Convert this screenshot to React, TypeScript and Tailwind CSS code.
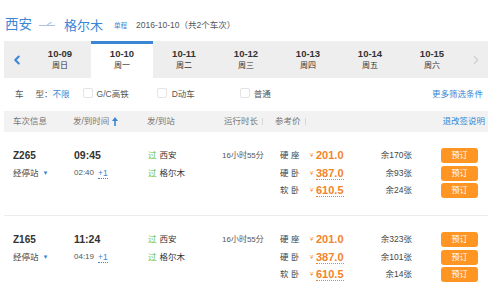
import { ChevronLeft, ChevronRight } from 'lucide-react';

const days = [
  { date: '10-09', week: '周日' },
  { date: '10-10', week: '周一', active: true },
  { date: '10-11', week: '周二' },
  { date: '10-12', week: '周三' },
  { date: '10-13', week: '周四' },
  { date: '10-14', week: '周五' },
  { date: '10-15', week: '周六' },
];

const trains = [
  {
    code: 'Z265',
    depart: '09:45',
    arrive: '02:40',
    seats: [
      { name: ['硬', '座'], price: '201.0', left: '余170张', dotted: false },
      { name: ['硬', '卧'], price: '387.0', left: '余93张', dotted: true },
      { name: ['软', '卧'], price: '610.5', left: '余24张', dotted: true },
    ],
  },
  {
    code: 'Z165',
    depart: '11:24',
    arrive: '04:19',
    seats: [
      { name: ['硬', '座'], price: '201.0', left: '余323张', dotted: false },
      { name: ['硬', '卧'], price: '387.0', left: '余101张', dotted: true },
      { name: ['软', '卧'], price: '610.5', left: '余14张', dotted: true },
    ],
  },
];

function Checkbox() {
  return <span className="w-[10px] h-[10px] shrink-0 border border-[#e4e4e4] rounded-[2px] bg-white inline-block" />;
}

function SortMark({ active }: { active?: boolean }) {
  if (active) {
    return (
      <svg width="6" height="9" viewBox="0 0 6 9" className="ml-[3px]">
        <path d="M3 0 L6 4 L3.8 4 L3.8 9 L2.2 9 L2.2 4 L0 4 Z" fill="#3a86d4" />
      </svg>
    );
  }
  return <span className="ml-[4px] w-[1px] h-[7px] bg-[#d8d8d8] inline-block" />;
}

function TrainRow({ train }: { train: (typeof trains)[number] }) {
  return (
    <div className="ml-[4px] w-[484px] h-[84px] border-b border-[#ececec] flex pt-[15px] pl-[9px] text-[8.5px] text-[#333]">
      <div className="w-[61px] shrink-0 flex flex-col">
        <div className="h-[17.5px] flex items-center font-bold text-[10px]">{train.code}</div>
        <div className="h-[17.5px] flex items-center text-[#444]">
          经停站 <span className="ml-[4px] text-[#3a86d4] text-[6px]">▼</span>
        </div>
      </div>
      <div className="w-[74px] shrink-0 flex flex-col">
        <div className="h-[17.5px] flex items-center font-bold text-[10.5px]">{train.depart}</div>
        <div className="h-[17.5px] flex items-center text-[8px] text-[#555]">
          {train.arrive}
          <span className="ml-[4px] text-[#3a86d4] border-b border-dotted border-[#3a86d4] leading-[10px] text-[8.5px]">+1</span>
        </div>
      </div>
      <div className="w-[74px] shrink-0 flex flex-col">
        <div className="h-[17.5px] flex items-center">
          <span className="text-[#5cbf3a] mr-[3px]">过</span>西安
        </div>
        <div className="h-[17.5px] flex items-center">
          <span className="text-[#5cbf3a] mr-[3px]">过</span>格尔木
        </div>
      </div>
      <div className="w-[58px] shrink-0 flex flex-col">
        <div className="h-[17.5px] flex items-center text-[8px] text-[#555] whitespace-nowrap">16小时55分</div>
      </div>
      <div className="flex flex-col">
        {train.seats.map((s) => (
          <div key={s.price} className="h-[17.5px] flex items-center">
            <span className="w-[30px] shrink-0 flex text-[8.5px] text-[#444]">
              <span className="w-[11px]">{s.name[0]}</span>
              <span>{s.name[1]}</span>
            </span>
            <span className="w-[70px] shrink-0 flex items-center text-[#f5832a]">
              <span className="text-[6px] w-[6px]">¥</span>
              <span
                className={
                  'font-bold text-[11px] leading-[12px] ' +
                  (s.dotted ? 'border-b border-dotted border-[#f5832a]' : 'border-b border-transparent')
                }
              >
                {s.price}
              </span>
            </span>
            <span className="w-[32px] shrink-0 text-[8.5px] text-[#444] whitespace-nowrap flex justify-end">{s.left}</span>
            <button className="ml-[29px] w-[37px] h-[15px] rounded-[3px] bg-[#ff9522] text-white text-[8px] leading-[15px]">
              预订
            </button>
          </div>
        ))}
      </div>
    </div>
  );
}

export default function App() {
  return (
    <div
      className="w-[500px] h-[299px] bg-white overflow-hidden text-[#333]"
      style={{ fontFamily: '"Liberation Sans", "Noto Sans CJK SC", sans-serif' }}
    >
      <div className="h-[41px] flex items-center pl-[5px] pt-[10px]">
        <span className="text-[13.5px] text-[#3a86d4]">西安</span>
        <span className="mx-[7px] w-[16px] h-[1px] bg-[#aac3e2] relative">
          <span className="absolute right-[3px] -top-[2px] w-[5px] h-[1px] bg-[#aac3e2] -rotate-[30deg]" />
        </span>
        <span className="ml-[2px] text-[13px] text-[#3a86d4]">格尔木</span>
        <span className="ml-[11px] text-[6.5px] text-[#3a86d4]">单程</span>
        <span className="ml-[9px] text-[8.5px] text-[#555]">2016-10-10（共2个车次）</span>
      </div>

      <div className="ml-[4px] w-[484px] h-[37px] bg-[#eeeeee] flex">
        <div className="w-[25px] flex items-center justify-center">
          <ChevronLeft size={14} strokeWidth={3.5} className="text-[#3a86d4]" />
        </div>
        {days.map((d) => (
          <div
            key={d.date}
            className={
              'w-[62px] flex flex-col items-center justify-center text-[#333] ' +
              (d.active ? 'bg-white border-t-[3px] border-[#3a86d4] pb-[3px]' : '')
            }
          >
            <span className="text-[9.5px] font-bold leading-[12px]">{d.date}</span>
            <span className="text-[8px] leading-[11px]">{d.week}</span>
          </div>
        ))}
        <div className="flex-1 flex items-center justify-center">
          <ChevronRight size={14} strokeWidth={2} className="text-[#cfcfcf]" />
        </div>
      </div>

      <div className="w-[488px] h-[33px] flex items-center text-[8.5px] text-[#555]">
        <span className="ml-[15px]">车</span>
        <span className="ml-[12px]">型：</span>
        <span className="text-[#3a86d4]">不限</span>
        <span className="ml-[13px]">
          <Checkbox />
        </span>
        <span className="ml-[4px]">G/C高铁</span>
        <span className="ml-[28px]">
          <Checkbox />
        </span>
        <span className="ml-[5px]">D动车</span>
        <span className="ml-[45px]">
          <Checkbox />
        </span>
        <span className="ml-[4px]">普通</span>
        <span className="ml-auto mr-[5px] text-[#3a86d4]">更多筛选条件</span>
      </div>

      <div className="ml-[4px] w-[484px] h-[21px] bg-[#f2f2f2] flex items-center pl-[9px] text-[8.5px] text-[#777]">
        <span className="w-[60px]">车次信息</span>
        <span className="w-[74px] flex items-center">
          发/到时间
          <SortMark active />
        </span>
        <span className="w-[77px]">发/到站</span>
        <span className="w-[51px] flex items-center">
          运行时长
          <SortMark />
        </span>
        <span className="flex items-center">
          参考价
          <SortMark />
        </span>
        <span className="ml-auto mr-[3px] text-[#3a86d4]">退改签说明</span>
      </div>

      {trains.map((t) => (
        <TrainRow key={t.code} train={t} />
      ))}
    </div>
  );
}
